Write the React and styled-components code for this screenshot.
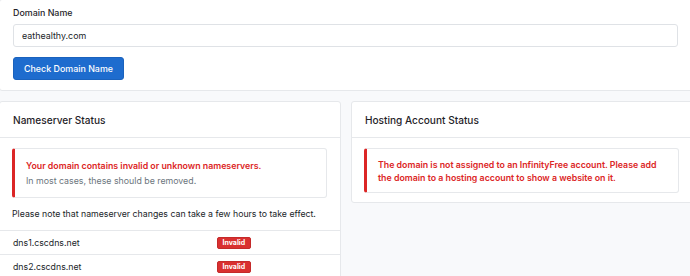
import React from "react";
import styled, { createGlobalStyle } from "styled-components";

const Global = createGlobalStyle`
  html, body { margin: 0; padding: 0; background: #f8f9fb; }
  body {
    font-family: Inter, "Noto Sans", sans-serif;
    color: #212529;
    overflow: hidden;
    -webkit-font-smoothing: antialiased;
  }
`;

const Page = styled.div`
  width: 694px;
  margin: -1px 0 0 -1px;
  display: flex;
  flex-direction: column;
  gap: 10px;
`;

const Card = styled.div`
  background: #fff;
  border: 1px solid #e6e8eb;
  border-radius: 3px;
`;

const FormCard = styled(Card)`
  padding: 7px 14px 10px 13px;
  display: flex;
  flex-direction: column;
  align-items: flex-start;
`;

const Label = styled.label`
  font-size: 8.9px;
  font-weight: 500;
  line-height: 12px;
  margin-bottom: 5px;
  color: #1f2328;
`;

const Input = styled.input`
  box-sizing: border-box;
  width: 100%;
  height: 23px;
  border: 1px solid #dfe2e6;
  border-radius: 3px;
  padding: 0 8px;
  font-family: inherit;
  font-size: 8.9px;
  color: #212529;
  outline: none;
`;

const Button = styled.button`
  margin-top: 10px;
  height: 23px;
  box-sizing: border-box;
  padding: 0 10px;
  background: #1e6cce;
  border: 1px solid #1a62bd;
  border-radius: 3px;
  color: #fff;
  font-family: inherit;
  font-size: 8.9px;
  font-weight: 500;
`;

const Columns = styled.div`
  display: grid;
  grid-template-columns: 342px 342px;
  gap: 10px;
  align-items: start;
`;

const CardHeader = styled.div`
  height: 35px;
  display: flex;
  align-items: center;
  padding: 0 13px;
  border-bottom: 1px solid #e6e8eb;
  font-size: 10.1px;
  font-weight: 500;
  color: #1f2328;
`;

const CardBody = styled.div`
  padding: 10px 13px 9px 12px;
`;

const Alert = styled.div`
  border: 1px solid #e6e8eb;
  border-left: 3px solid #dc2626;
  border-radius: 3px;
  padding: ${(p) => (p.$tight ? "10px 12px 8px 11px" : "10px 12px 10px 11px")};
  font-size: 8.8px;
  line-height: ${(p) => (p.$tight ? "12.5px" : "13px")};
`;

const AlertTitle = styled.div`
  color: #dc2626;
  font-weight: 600;
  margin-bottom: ${(p) => (p.$spaced ? "2px" : "0")};
`;

const AlertText = styled.div`
  color: #6c757d;
`;

const Note = styled.p`
  margin: 10px 0 0;
  font-size: 8.75px;
  line-height: 13px;
  color: #212529;
`;

const Table = styled.div`
  display: flex;
  flex-direction: column;
`;

const Row = styled.div`
  box-sizing: border-box;
  display: grid;
  grid-template-columns: 204px 1fr;
  align-items: center;
  height: 24px;
  border-top: 1px solid #e6e8eb;
  font-size: 8.75px;
  padding-left: 13px;
`;

const Badge = styled.span`
  justify-self: start;
  box-sizing: border-box;
  height: 12px;
  display: inline-flex;
  align-items: center;
  background: #d93030;
  border: 1px solid #c42a2a;
  color: #fff;
  font-size: 7px;
  font-weight: 700;
  padding: 0 4.5px;
  border-radius: 2px;
`;

export default function App() {
  const servers = ["dns1.cscdns.net", "dns2.cscdns.net"];
  return (
    <>
      <Global />
      <Page>
        <FormCard>
          <Label>Domain Name</Label>
          <Input defaultValue="eathealthy.com" />
          <Button>Check Domain Name</Button>
        </FormCard>
        <Columns>
          <Card>
            <CardHeader>Nameserver Status</CardHeader>
            <CardBody>
              <Alert>
                <AlertTitle $spaced>Your domain contains invalid or unknown nameservers.</AlertTitle>
                <AlertText>In most cases, these should be removed.</AlertText>
              </Alert>
              <Note>Please note that nameserver changes can take a few hours to take effect.</Note>
            </CardBody>
            <Table>
              {servers.map((s) => (
                <Row key={s}>
                  <span>{s}</span>
                  <Badge>Invalid</Badge>
                </Row>
              ))}
            </Table>
          </Card>
          <Card>
            <CardHeader>Hosting Account Status</CardHeader>
            <CardBody>
              <Alert $tight>
                <AlertTitle>
                  The domain is not assigned to an InfinityFree account. Please add the domain to a hosting account to show a website on it.
                </AlertTitle>
              </Alert>
            </CardBody>
          </Card>
        </Columns>
      </Page>
    </>
  );
}
